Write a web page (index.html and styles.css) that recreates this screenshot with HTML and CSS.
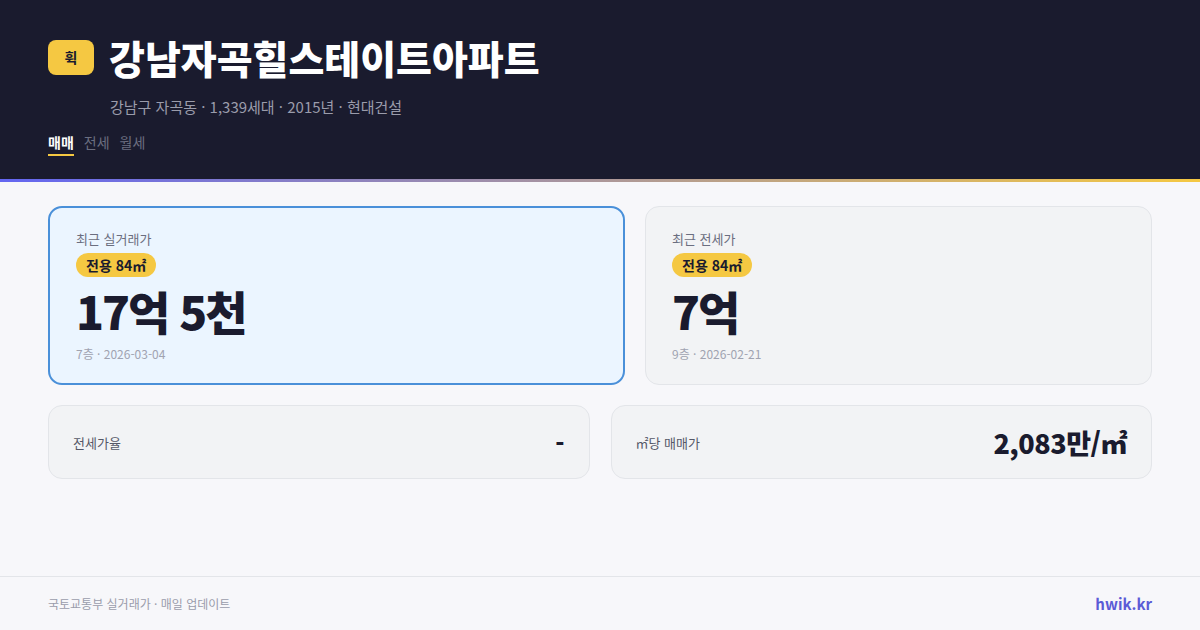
FILE: index.html
```html
<!DOCTYPE html>
<html lang="ko">
<head>
<meta charset="utf-8">
<link rel="stylesheet" href="styles.css">
</head>
<body>
<div class="page">
  <header class="hero">
    <div class="title-row">
      <span class="logo">휙</span>
      <h1 class="title">강남자곡힐스테이트아파트</h1>
    </div>
    <p class="sub">강남구 자곡동 · 1,339세대 · 2015년 · 현대건설</p>
    <nav class="tabs">
      <span class="tab active">매매</span>
      <span class="tab">전세</span>
      <span class="tab">월세</span>
    </nav>
  </header>
  <div class="accent"></div>
  <main class="main">
    <section class="top-grid">
      <div class="card card-primary">
        <div class="card-label">최근 실거래가</div>
        <span class="pill">전용 84㎡</span>
        <div class="price">17억 5천</div>
        <div class="meta">7층 · 2026-03-04</div>
      </div>
      <div class="card">
        <div class="card-label">최근 전세가</div>
        <span class="pill">전용 84㎡</span>
        <div class="price">7억</div>
        <div class="meta">9층 · 2026-02-21</div>
      </div>
    </section>
    <section class="bottom-grid">
      <div class="stat">
        <span class="stat-label">전세가율</span>
        <span class="stat-value">-</span>
      </div>
      <div class="stat">
        <span class="stat-label">㎡당 매매가</span>
        <span class="stat-value big">2,083만/㎡</span>
      </div>
    </section>
  </main>
  <footer class="footer">
    <span class="source">국토교통부 실거래가 · 매일 업데이트</span>
    <span class="brand">hwik.kr</span>
  </footer>
</div>
</body>
</html>
```

FILE: styles.css
```css
* { box-sizing: border-box; margin: 0; padding: 0; }
html, body { width: 1200px; height: 630px; overflow: hidden; }
body {
  font-family: "Noto Sans CJK KR", "Noto Sans", sans-serif;
  background: #f7f7fa;
  color: #1a1b2e;
}
.page { height: 630px; display: flex; flex-direction: column; }

.hero {
  background: #1a1b2e;
  height: 179px;
  padding: 39px 48px 0;
}
.title-row { display: flex; align-items: center; gap: 15px; height: 36px; }
.logo {
  width: 46px; height: 35px;
  background: #f5c842;
  border-radius: 8px;
  display: flex; align-items: center; justify-content: center;
  font-size: 14px; font-weight: 700; color: #1a1b2e;
}
.title {
  font-size: 39px; font-weight: 900; color: #fff;
  letter-spacing: 0; line-height: 1;
}
.sub {
  margin-top: 23px;
  padding-left: 62px;
  font-size: 15px; color: #9a9cab; line-height: 18px;
}
.tabs { display: flex; gap: 10px; margin-top: 17px; }
.tab {
  font-size: 14px; color: #6b6e80; line-height: 18px;
  padding-bottom: 3px;
  border-bottom: 2px solid transparent;
}
.tab.active { color: #fff; font-weight: 700; border-bottom-color: #f5c842; }

.accent { height: 3px; background: linear-gradient(90deg, #6366f1, #f5c842); }

.main { flex: 1; padding: 24px 48px 0; }
.top-grid { display: grid; grid-template-columns: 577px 1fr; gap: 20px; }
.card {
  height: 179px;
  background: #f2f3f5;
  border: 1px solid #e3e5e9;
  border-radius: 14px;
  padding: 23px 26px 0;
  display: flex; flex-direction: column; align-items: flex-start;
}
.card-primary { background: #ebf5ff; border: 2px solid #4a90d9; padding: 22px 26px 0; }
.card-label { font-size: 13px; color: #6b6e80; line-height: 18px; }
.pill {
  margin-top: 5px;
  background: #f5c842;
  border-radius: 12px;
  padding: 0 10px;
  height: 24px; line-height: 24px;
  font-size: 14px; font-weight: 700; color: #1a1b2e;
}
.price {
  margin-top: 4px;
  font-size: 46px; font-weight: 900; letter-spacing: -2px; line-height: 58px;
  color: #1a1b2e;
}
.meta { margin-top: 7px; font-size: 12px; color: #a0a3b1; line-height: 16px; }

.bottom-grid { display: grid; grid-template-columns: 1fr 1fr; gap: 21px; margin-top: 20px; }
.stat {
  height: 74px;
  background: #f2f3f5;
  border: 1px solid #e3e5e9;
  border-radius: 14px;
  padding: 0 24px;
  display: flex; align-items: center; justify-content: space-between;
}
.stat-label { font-size: 13px; color: #555868; }
.stat-value { font-size: 24px; font-weight: 900; color: #1a1b2e; }
.stat-value.big { font-size: 27px; letter-spacing: -0.5px; }

.footer {
  height: 54px;
  border-top: 1px solid #e3e5e9;
  padding: 0 48px;
  display: flex; align-items: center; justify-content: space-between;
}
.source { font-size: 12px; color: #9a9cab; }
.brand { font-size: 15px; font-weight: 700; color: #5b5bd6; }
```
